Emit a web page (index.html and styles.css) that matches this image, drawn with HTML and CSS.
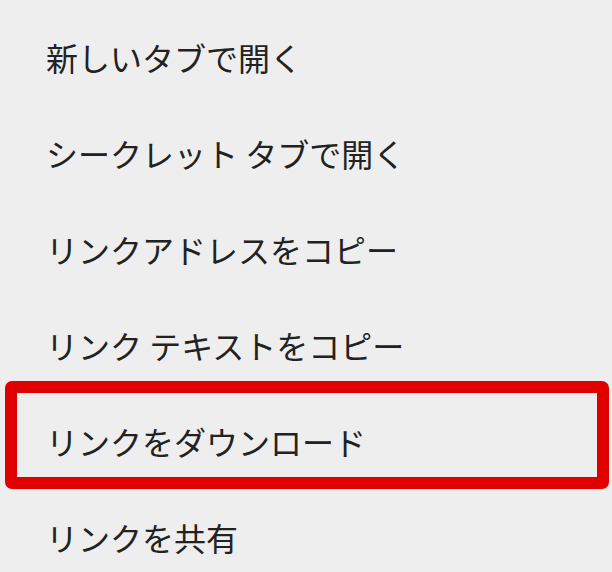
FILE: index.html
```html
<!DOCTYPE html>
<html lang="ja">
<head>
<meta charset="utf-8">
<link rel="stylesheet" href="styles.css">
</head>
<body>
<ul class="menu">
  <li class="item">新しいタブで開く</li>
  <li class="item">シークレット タブで開く</li>
  <li class="item">リンクアドレスをコピー</li>
  <li class="item">リンク テキストをコピー</li>
  <li class="item highlighted">リンクをダウンロード</li>
  <li class="item">リンクを共有</li>
</ul>
</body>
</html>
```
FILE: styles.css
```css
html, body {
  margin: 0;
  padding: 0;
  background: #eeeeee;
  width: 612px;
  height: 572px;
  overflow: hidden;
}
.menu {
  list-style: none;
  margin: 0;
  padding: 9px 0 0 0;
}
.item {
  position: relative;
  height: 96px;
  padding-left: 46px;
  display: flex;
  align-items: center;
  font-family: "Noto Sans CJK JP", "Noto Sans", sans-serif;
  font-size: 32px;
  color: #222222;
  white-space: pre;
}
.highlighted::after {
  content: "";
  position: absolute;
  left: 5px;
  top: -12px;
  width: 604px;
  height: 108px;
  box-sizing: border-box;
  border: 12px solid #e10000;
  border-radius: 7px;
}
```
